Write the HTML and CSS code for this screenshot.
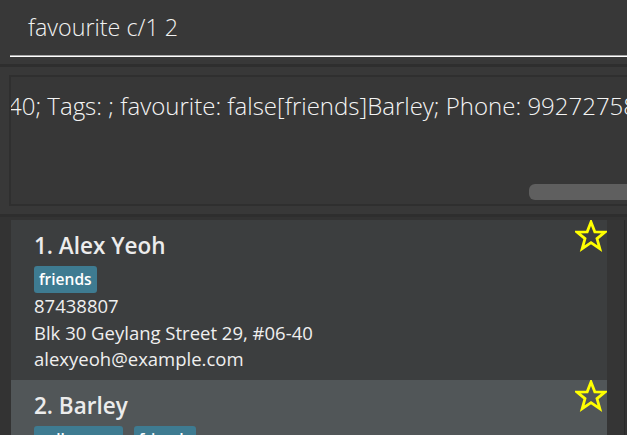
FILE: index.html
```html
<!DOCTYPE html>
<html>
<head>
<meta charset="utf-8">
<link rel="stylesheet" href="styles.css">
</head>
<body>
<div class="app">
  <div class="command">
    <div class="command-field">favourite c/1 2</div>
  </div>
  <div class="band"></div>
  <div class="result-wrap">
    <div class="result">
      <div class="result-text">40; Tags: ; favourite: false[friends]Barley; Phone: 99272758; Email: lidavid@example.com</div>
      <div class="hscroll"><div class="thumb"></div></div>
    </div>
  </div>
  <div class="band band-low"></div>
  <div class="list">
    <div class="cards">
      <div class="card">
        <div class="card-main">
          <div class="name">1. Alex Yeoh</div>
          <div class="tags"><span class="tag">friends</span></div>
          <div class="line">87438807</div>
          <div class="line">Blk 30 Geylang Street 29, #06-40</div>
          <div class="line">alexyeoh@example.com</div>
        </div>
        <svg class="star" width="32" height="32" viewBox="0 0 32 32"><polygon points="16,2 19.8,11.8 30,12 22,18.6 24.8,28.6 16,22.6 7.2,28.6 10,18.6 2,12 12.2,11.8" fill="none" stroke="#ffff00" stroke-width="2.8" stroke-linejoin="miter"/></svg>
      </div>
      <div class="card card-sel">
        <div class="card-main">
          <div class="name">2. Barley</div>
          <div class="tags"><span class="tag">colleagues</span><span class="tag">friends</span></div>
          <div class="line">99272758</div>
        </div>
        <svg class="star" width="32" height="32" viewBox="0 0 32 32"><polygon points="16,2 19.8,11.8 30,12 22,18.6 24.8,28.6 16,22.6 7.2,28.6 10,18.6 2,12 12.2,11.8" fill="none" stroke="#ffff00" stroke-width="2.8" stroke-linejoin="miter"/></svg>
      </div>
    </div>
    <div class="vtrack"></div>
  </div>
</div>
</body>
</html>
```
FILE: styles.css
```css
html, body {
  margin: 0;
  padding: 0;
  background: #383838;
  overflow: hidden;
}
.app {
  width: 627px;
  height: 435px;
  display: flex;
  flex-direction: column;
  font-family: "Open Sans", "Noto Sans", sans-serif;
  color: #ffffff;
  overflow: hidden;
}
.command {
  height: 64px;
  padding-left: 10px;
  box-sizing: border-box;
  flex: none;
}
.command-field {
  height: 57px;
  box-sizing: border-box;
  padding-left: 18px;
  padding-top: 10px;
  font-size: 23.3px;
  line-height: 34px;
  font-weight: 300;
  color: #f2f2f2;
  border-bottom: 1px solid #ffffff;
  position: relative;
}
.command-field::after {
  content: "";
  position: absolute;
  left: 0;
  right: 0;
  bottom: 0;
  height: 1px;
  background: #a8a8a8;
}
.band {
  height: 3px;
  background: #2e2e2e;
  flex: none;
}
.band-low {
  margin-top: 8px;
}
.result-wrap {
  padding: 8px 0 0 9px;
  flex: none;
}
.result {
  height: 131px;
  box-sizing: border-box;
  border: 2px solid #2f2f2f;
  border-right: none;
  background: #373737;
  position: relative;
  overflow: hidden;
}
.result-text {
  white-space: nowrap;
  font-size: 24px;
  line-height: 32px;
  font-weight: 300;
  color: #f4f4f4;
  margin-left: -3px;
  padding-top: 13px;
}
.hscroll {
  position: absolute;
  left: 0;
  right: 0;
  bottom: 4px;
  height: 16px;
}
.thumb {
  position: absolute;
  left: 518px;
  right: -10px;
  top: 0;
  bottom: 0;
  background: #5f5f5f;
  border-radius: 6px;
}
.list {
  flex: 1;
  display: flex;
  background: #333333;
  padding-left: 11px;
  padding-top: 3px;
  min-height: 0;
  overflow: hidden;
}
.cards {
  width: 596px;
  display: flex;
  flex-direction: column;
}
.vtrack {
  width: 17px;
  background: #353535;
  border-right: 1px solid #2a2a2a;
}
.card {
  display: flex;
  justify-content: space-between;
  background: #3c3e3f;
  flex: none;
}
.card:first-child {
  height: 160px;
}
.card-sel {
  background: #515658;
}
.card-main {
  padding: 11px 0 0 23px;
}
.name {
  font-size: 22.5px;
  font-weight: 600;
  color: #ececec;
  line-height: 30px;
}
.tags {
  display: flex;
  gap: 11px;
  margin-top: 5px;
}
.tag {
  background: #3e7b91;
  border-radius: 3px;
  font-size: 15.5px;
  font-weight: 600;
  color: #ffffff;
  padding: 0 5px;
  line-height: 27px;
  height: 27px;
}
.line {
  font-size: 18.5px;
  color: #efefef;
  line-height: 26.5px;
}
.star {
  flex: none;
}
```
